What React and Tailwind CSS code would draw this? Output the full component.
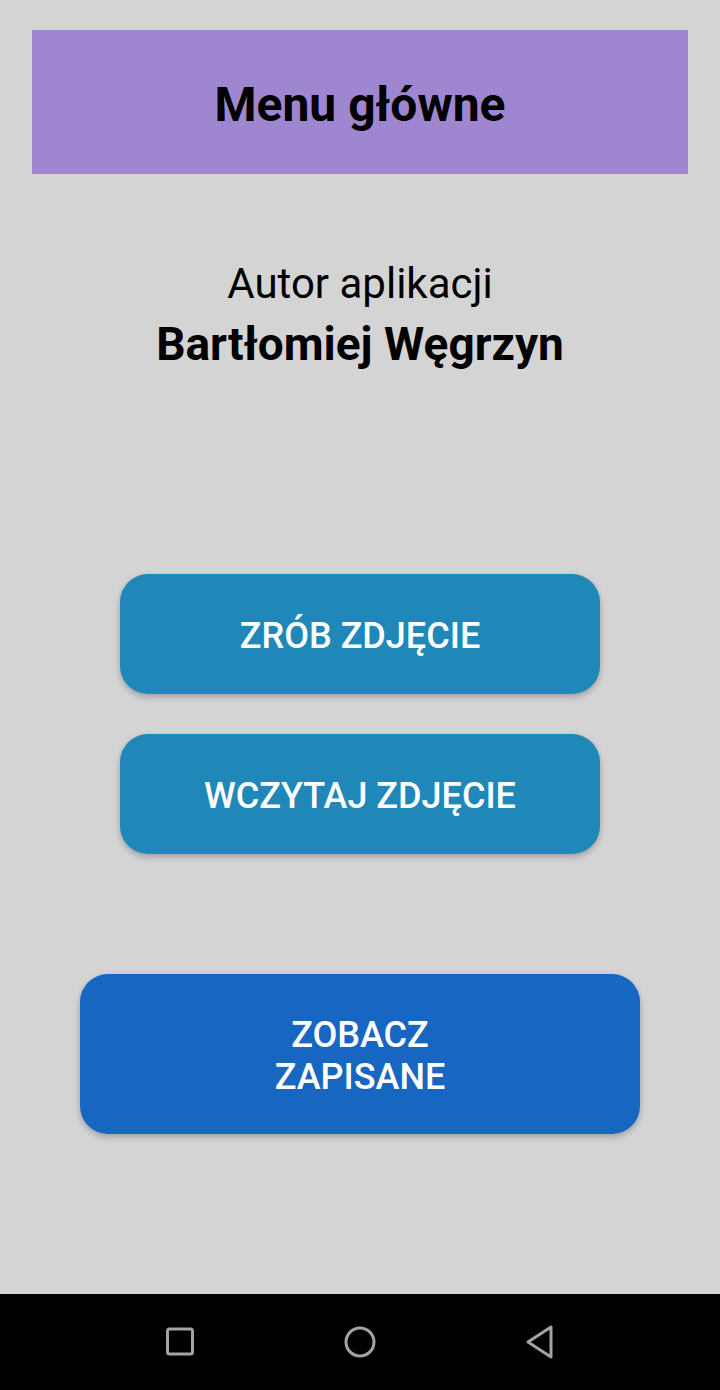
export default function App() {
  const font = { fontFamily: "Roboto, 'Noto Sans', sans-serif" };

  return (
    <div
      className="w-[720px] h-[1390px] bg-[#d4d4d4] flex flex-col overflow-hidden"
      style={font}
    >
      {/* header */}
      <div className="pt-[30px] px-[32px]">
        <div className="h-[144px] pt-[5px] bg-[#9f86d0] flex items-center justify-center">
          <h1 className="text-[48px] leading-none font-bold text-black">
            Menu główne
          </h1>
        </div>
      </div>

      {/* author */}
      <div className="mt-[86px] flex flex-col items-center text-black">
        <p className="text-[42px] leading-[48px]">Autor aplikacji</p>
        <p className="mt-[8px] text-[46px] leading-[56px] font-bold">
          Bartłomiej Węgrzyn
        </p>
      </div>

      {/* buttons */}
      <div className="mt-[202px] flex flex-col items-center">
        <button className="w-[480px] h-[120px] pt-[3px] rounded-[28px] bg-[#1f88b8] text-white text-[36px] font-medium shadow-[0_3px_6px_rgba(0,0,0,0.25)]">
          ZRÓB ZDJĘCIE
        </button>
        <button className="mt-[40px] w-[480px] h-[120px] pt-[3px] rounded-[28px] bg-[#1f88b8] text-white text-[36px] font-medium shadow-[0_3px_6px_rgba(0,0,0,0.25)]">
          WCZYTAJ ZDJĘCIE
        </button>
        <button className="mt-[120px] w-[560px] h-[160px] pt-[3px] rounded-[28px] bg-[#1766c2] text-white text-[36px] leading-[42px] font-medium shadow-[0_3px_6px_rgba(0,0,0,0.25)]">
          ZOBACZ
          <br />
          ZAPISANE
        </button>
      </div>

      {/* android nav bar */}
      <div className="mt-auto h-[96px] bg-black flex items-center justify-center">
        <div className="w-[180px] flex justify-center">
          <svg width="30" height="32" viewBox="0 0 30 32">
            <rect x="2.5" y="3" width="25" height="25" rx="2" fill="none" stroke="#a3a3a3" strokeWidth="3" />
          </svg>
        </div>
        <div className="w-[180px] flex justify-center">
          <svg width="32" height="32" viewBox="0 0 32 32">
            <circle cx="16" cy="16" r="14" fill="none" stroke="#a3a3a3" strokeWidth="3" />
          </svg>
        </div>
        <div className="w-[180px] flex justify-center">
          <svg width="32" height="36" viewBox="0 0 32 36">
            <path d="M27 3 L27 33 L4 18 Z" fill="none" stroke="#a3a3a3" strokeWidth="3" strokeLinejoin="round" />
          </svg>
        </div>
      </div>
    </div>
  );
}
